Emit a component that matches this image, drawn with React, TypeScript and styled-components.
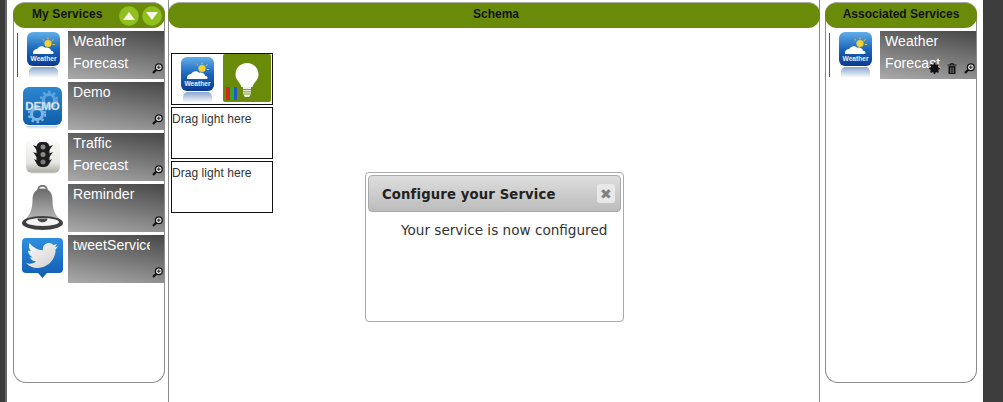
import React from "react";
import styled, { createGlobalStyle } from "styled-components";

const Global = createGlobalStyle`
  html, body { margin: 0; padding: 0; height: 402px; overflow: hidden; background: #fff; }
  #root { height: 402px; }
`;

const Page = styled.div`
  display: flex;
  width: 1003px;
  height: 402px;
  overflow: hidden;
  font-family: "Liberation Sans", Arial, sans-serif;
`;
const Edge = styled.div`
  width: 7px;
  flex: none;
  background: linear-gradient(90deg, #3c3c3c 0 5px, #666 5px);
`;
const RightEdge = styled.div`
  flex: 1;
  background: #3d3d3d;
`;
const Stage = styled.div`
  position: relative;
  display: flex;
  align-items: flex-start;
  width: 976px;
  flex: none;
  padding: 2px 6px 0 6px;
  box-sizing: border-box;
  gap: 3px;
  background: #fff;
`;
const SidePanel = styled.section`
  width: 152px;
  height: 381px;
  flex: none;
  box-sizing: border-box;
  border: 1px solid #8c8c8c;
  border-top: none;
  border-radius: 13px;
`;
const Head = styled.header`
  height: 26px;
  margin: 0 -1px;
  box-sizing: border-box;
  display: flex;
  align-items: center;
  background: #6a8b0a;
  border-top: 1px solid #a9a9a0;
  border-radius: 12px;
  color: #10140a;
  font-weight: bold;
  font-size: 12px;
`;
const HeadTitle = styled.span<{ $shift?: number }>`
  flex: 1;
  margin-top: -3px;
  text-align: center;
  padding-left: ${(p) => p.$shift ?? 0}px;
`;
const LeftTitle = styled.span`
  flex: 1;
  margin-top: -3px;
  padding-left: 19px;
  letter-spacing: 0.1px;
`;
const RoundBtn = styled.span`
  width: 20px;
  height: 20px;
  margin-right: 3px;
  border-radius: 50%;
  background: radial-gradient(circle, #90bf20 0 62%, #7aa312 78%, #5f8208 100%);
  display: flex;
  align-items: center;
  justify-content: center;
  flex: none;
`;
const Tri = styled.i<{ $down?: boolean }>`
  width: 0;
  height: 0;
  border-left: 6px solid transparent;
  border-right: 6px solid transparent;
  ${(p) => (p.$down ? "border-top: 8px solid #f6f8e8;" : "border-bottom: 8px solid #f6f8e8;")}
`;
const List = styled.div`
  display: flex;
  flex-direction: column;
  gap: 3px;
  padding: 3px 0 0 0;
`;
const Row = styled.div`
  display: flex;
  height: 48px;
  position: relative;
`;
const Marker = styled.i`
  position: absolute;
  left: 3px;
  top: 2px;
  width: 1px;
  height: 44px;
  background: #555;
`;
const IconSlot = styled.div<{ $x: number; $y: number }>`
  width: 54px;
  flex: none;
  box-sizing: border-box;
  padding: ${(p) => p.$y}px 0 0 ${(p) => p.$x - 1}px;
  svg { display: block; }
`;
const Tile = styled.div`
  position: relative;
  width: 96px;
  height: 48px;
  flex: none;
  background: linear-gradient(190deg, #474747, #ababab);
  color: #fff;
  font-size: 14px;
  line-height: 22px;
  letter-spacing: 0.1px;
  padding: 0 0 0 5px;
  box-sizing: border-box;
`;
const TileText = styled.div`
  width: 77px;
  overflow: hidden;
  white-space: nowrap;
  margin-top: -1px;
`;
const TileActions = styled.div`
  position: absolute;
  right: 1px;
  bottom: 5px;
  display: flex;
  gap: 7px;
  align-items: center;
`;
const SchemaColumn = styled.main`
  width: 652px;
  height: 402px;
  flex: none;
  margin-top: -2px;
  margin-right: 2px;
  padding-top: 2px;
  box-sizing: border-box;
  border-left: 1px solid #8c8c8c;
  border-right: 1px solid #8c8c8c;
`;
const Slots = styled.div`
  display: flex;
  flex-direction: column;
  gap: 2px;
  width: 102px;
  padding: 25px 0 0 2px;
`;
const Slot = styled.div`
  display: flex;
  align-items: flex-start;
  height: 52px;
  box-sizing: border-box;
  border: 1px solid #111;
  color: #333;
  font-size: 12px;
  line-height: 22px;
  letter-spacing: 0.05px;
`;
const FilledSlot = styled(Slot)`
  justify-content: space-between;
  padding: 0 1px 0 9px;
`;
const SlotIcon = styled.div`
  padding-top: 3px;
  svg { display: block; }
`;
const Bulb = styled.div`
  width: 48px;
  height: 48px;
  border-radius: 2px;
  background: #6a8b0a;
  svg { display: block; }
`;
const Dialog = styled.div`
  position: absolute;
  left: 358px;
  top: 172px;
  width: 259px;
  height: 150px;
  box-sizing: border-box;
  border: 1px solid #aaa;
  border-radius: 4px;
  background: #fff;
  padding: 2px;
  font-family: "DejaVu Sans", Verdana, sans-serif;
  color: #222;
`;
const DialogHead = styled.div`
  height: 37px;
  box-sizing: border-box;
  border: 1px solid #aaa;
  border-radius: 4px;
  background: linear-gradient(180deg, #dedede, #bcbcbc);
  display: flex;
  align-items: center;
  justify-content: space-between;
  padding: 1px 5px 0 13px;
  font-weight: bold;
  font-size: 13.2px;
  letter-spacing: 0.15px;
`;
const Close = styled.span`
  width: 18px;
  height: 19px;
  margin-top: -1px;
  border-radius: 3px;
  background: #e8e8e8;
  color: #808080;
  display: flex;
  align-items: center;
  justify-content: center;
  font-size: 14px;
`;
const DialogBody = styled.p`
  margin: 0;
  padding: 10px 0 0 33px;
  font-size: 13.6px;
  line-height: 16px;
  color: #333;
  white-space: nowrap;
`;

const WeatherIcon = () => (
  <svg width="34" height="46" viewBox="0 0 34 46">
    <defs>
      <linearGradient id="wb" x1="0" y1="0" x2="0" y2="1"><stop offset="0" stopColor="#62aee8" /><stop offset=".5" stopColor="#1a66bc" /><stop offset="1" stopColor="#0b3a8e" /></linearGradient>
      <linearGradient id="wr" x1="0" y1="0" x2="0" y2="1"><stop offset="0" stopColor="#8aa6cd" /><stop offset="1" stopColor="#fff" /></linearGradient>
    </defs>
    <rect x="0" y="0" width="33" height="34" rx="6" fill="url(#wb)" />
    <path d="M2 46V40c0-3 2-5 5-5h19c3 0 5 2 5 5v6z" fill="url(#wr)" />
    <circle cx="21" cy="11.5" r="3.6" fill="#f5d033" />
    <path d="M21 5.5v2M26.5 7.5l-2 1.5M28 12.5h-2.4M15.5 7l1.6 1.5" stroke="#f5d033" strokeWidth=".9" />
    <path d="M6 21c0-3 2.4-4 4.2-4 1-3 6-4 8-1.2 3-1 5.6.8 5.8 3 1.6 0 2.6 1.2 2.6 2.4-.1.5-.4.8-1 .8H7c-.6 0-1-.4-1-1z" fill="#fff" />
    <text x="16.5" y="29" textAnchor="middle" fontFamily="Liberation Sans, Arial, sans-serif" fontSize="6.6" fontWeight="bold" fill="#e9f1fa">Weather</text>
  </svg>
);
const DemoIcon = () => (
  <svg width="39" height="42" viewBox="0 0 39 42">
    <defs>
      <linearGradient id="db" x1="0" y1="0" x2="0" y2="1"><stop offset="0" stopColor="#2c86d0" /><stop offset="1" stopColor="#0f5fa9" /></linearGradient>
      <linearGradient id="dr" x1="0" y1="0" x2="0" y2="1"><stop offset="0" stopColor="#b8cde2" /><stop offset="1" stopColor="#fff" /></linearGradient>
    </defs>
    <rect x="0" y="0" width="39" height="38" rx="6" fill="url(#db)" />
    <path d="M3 39h33l-3 3H6z" fill="url(#dr)" />
    <circle cx="26" cy="13" r="5.5" fill="none" stroke="#5fa5dd" strokeWidth="3" />
    <circle cx="26" cy="13" r="8" fill="none" stroke="#5fa5dd" strokeWidth="2.4" strokeDasharray="2.6 2.6" />
    <circle cx="14" cy="27" r="5.5" fill="none" stroke="#7ab5e4" strokeWidth="3" />
    <circle cx="14" cy="27" r="8" fill="none" stroke="#7ab5e4" strokeWidth="2.4" strokeDasharray="2.6 2.6" />
    <text x="19.5" y="23" textAnchor="middle" fontFamily="Liberation Sans, Arial, sans-serif" fontSize="11.5" fontWeight="bold" fill="#e8f0f8" stroke="#9ab8d4" strokeWidth=".3">DEMO</text>
  </svg>
);
const TrafficIcon = () => (
  <svg width="34" height="36" viewBox="0 0 34 36">
    <defs>
      <linearGradient id="tb" x1="0" y1="0" x2="0" y2="1"><stop offset="0" stopColor="#fcfcfc" /><stop offset=".7" stopColor="#e6e6e2" /><stop offset="1" stopColor="#a8a8a0" /></linearGradient>
    </defs>
    <rect x="0" y="0" width="34" height="34" rx="6" fill="url(#tb)" />
    <path d="M4 34h26" stroke="#ddd" strokeWidth="1" />
    <rect x="10.5" y="3" width="13" height="25" rx="5" fill="#1d1d1d" />
    <path d="M7 6l4 1.5v4zM27 6l-4 1.5v4zM7 13l4 1.5v4zM27 13l-4 1.5v4zM8 20l3 1.5v3.5zM26 20l-3 1.5v3.5z" fill="#1d1d1d" />
    <circle cx="17" cy="8" r="2.5" fill="#8a8a8a" />
    <circle cx="17" cy="15.5" r="2.5" fill="#8a8a8a" />
    <circle cx="17" cy="23" r="2.5" fill="#7a7a7a" />
  </svg>
);
const BellIcon = () => (
  <svg width="41" height="45" viewBox="0 0 41 45">
    <defs>
      <linearGradient id="bb" x1="0" y1="0" x2="0" y2="1"><stop offset="0" stopColor="#6a6a6a" /><stop offset=".85" stopColor="#b0b0b0" /></linearGradient>
    </defs>
    <path d="M16 6c0-7 9-7 9 0" fill="none" stroke="#777" strokeWidth="2" />
    <path d="M20.5 3.5c6.5 0 10 4.5 10 11 0 9 2 15 7.5 20-6 3-29 3-35 0 5.500-5 7.500-11 7.500-20 0-6.500 3.500-11 10-11z" fill="url(#bb)" />
    <ellipse cx="20.500" cy="38" rx="20.500" ry="7" fill="#3f3f3f" />
    <ellipse cx="20.500" cy="37" rx="16.500" ry="4" fill="#f4f4f4" />
    <path d="M15.500 33.500h10c0 5-10 5-10 0z" fill="#4a4a4a" />
  </svg>
);
const TwitterIcon = () => (
  <svg width="41" height="40" viewBox="0 0 41 40">
    <defs>
      <linearGradient id="twb" x1="0" y1="0" x2="0" y2="1"><stop offset="0" stopColor="#2f8ee0" /><stop offset="1" stopColor="#0f5cb0" /></linearGradient>
      <linearGradient id="twf" x1="0" y1="0" x2="1" y2="1"><stop offset="0" stopColor="#fbfbfb" /><stop offset="1" stopColor="#cfcfcf" /></linearGradient>
    </defs>
    <path d="M4 0h33a4 4 0 0 1 4 4v27a4 4 0 0 1-4 4H25l-4.500 5-4.500-5H4a4 4 0 0 1-4-4V4a4 4 0 0 1 4-4z" fill="url(#twb)" />
    <path d="M4 25c4 1.500 7.500.5 10-1.500-3-.3-5-1.800-6-4.200h3.200C8 18 6 15.500 6 12.500c1 .6 2 .8 3 .8C7 11 6.400 8 7.500 5c3.500 4.500 8 7 13.500 7.300-.8-4 2-7.300 6-7.300 2 0 3.500.8 4.500 2l3.500-1-2 3.200 3.200-.9-2.600 3c.2 9.500-7 18.200-17.600 18.700C12 30.300 7.500 28.700 4 25z" fill="url(#twf)" />
  </svg>
);
const Magnifier = () => (
  <svg width="11" height="11" viewBox="0 0 11 11">
    <circle cx="6.800" cy="4.200" r="3.400" fill="#e8e8e8" stroke="#111" strokeWidth="1.300" />
    <path d="M4.200 6.800L1 10" stroke="#111" strokeWidth="2.200" />
    <path d="M5 4.200h3.600M6.800 2.400V6" stroke="#111" strokeWidth=".9" />
  </svg>
);
const Gear = () => (
  <svg width="11" height="11" viewBox="0 0 11 11">
    <circle cx="5.500" cy="5.500" r="3.200" fill="#333" stroke="#111" strokeWidth="2.200" />
    <path d="M5.500 0v11M0 5.500h11M1.600 1.600l7.800 7.800M9.400 1.600L1.600 9.400" stroke="#111" strokeWidth="1.500" />
  </svg>
);
const Trash = () => (
  <svg width="10" height="11" viewBox="0 0 10 11">
    <path d="M0.500 2h9M3.500 2V.7h3V2" fill="none" stroke="#111" strokeWidth="1" />
    <path d="M1.500 3.200h7V11h-7z" fill="#111" />
    <path d="M3.500 4.500V10M5 4.500V10M6.500 4.500V10" stroke="#999" strokeWidth=".6" />
  </svg>
);
const BulbIcon = () => (
  <svg width="48" height="48" viewBox="0 0 48 48">
    <rect x="3" y="33" width="4" height="13" fill="#d8261c" />
    <rect x="7" y="33" width="4" height="13" fill="#35a82c" />
    <rect x="11" y="33" width="3" height="13" fill="#2456c8" />
    <path d="M24 9c6.500 0 11.500 5 11.500 11.500 0 5.500-4.500 7.500-6 12.500h-11c-1.500-5-6-7-6-12.500C12.500 14 17.500 9 24 9z" fill="#fff" />
    <path d="M20 33h8v7l-2 3h-4l-2-3z" fill="#eceee0" />
    <path d="M20 35.500h8M20 37.800h8M20 40h8" stroke="#6a8b0a" strokeWidth=".8" />
  </svg>
);

const services = [
  { lines: ["Weather", "Forecast"], icon: <WeatherIcon />, x: 14, y: 1, marker: true },
  { lines: ["Demo"], icon: <DemoIcon />, x: 10, y: 5 },
  { lines: ["Traffic", "Forecast"], icon: <TrafficIcon />, x: 13, y: 6 },
  { lines: ["Reminder"], icon: <BellIcon />, x: 9, y: 1 },
  { lines: ["tweetService"], icon: <TwitterIcon />, x: 9, y: 3 },
];

export default function App() {
  return (
    <Page>
      <Global />
      <Edge />
      <Stage>
        <SidePanel>
          <Head>
            <LeftTitle>My Services</LeftTitle>
            <RoundBtn><Tri /></RoundBtn>
            <RoundBtn><Tri $down /></RoundBtn>
          </Head>
          <List>
            {services.map((s) => (
              <Row key={s.lines[0]}>
                {s.marker && <Marker />}
                <IconSlot $x={s.x} $y={s.y}>{s.icon}</IconSlot>
                <Tile>
                  <TileText>{s.lines.map((l) => <div key={l}>{l}</div>)}</TileText>
                  <TileActions><Magnifier /></TileActions>
                </Tile>
              </Row>
            ))}
          </List>
        </SidePanel>
        <SchemaColumn>
          <Head><HeadTitle $shift={4}>Schema</HeadTitle></Head>
          <Slots>
            <FilledSlot>
              <SlotIcon><WeatherIcon /></SlotIcon>
              <Bulb><BulbIcon /></Bulb>
            </FilledSlot>
            <Slot>Drag light here</Slot>
            <Slot>Drag light here</Slot>
          </Slots>
        </SchemaColumn>
        <SidePanel>
          <Head><HeadTitle>Associated Services</HeadTitle></Head>
          <List>
            <Row>
              <Marker />
              <IconSlot $x={14} $y={1}><WeatherIcon /></IconSlot>
              <Tile>
                <TileText>
                  <div>Weather</div>
                  <div>Forecast</div>
                </TileText>
                <TileActions><Gear /><Trash /><Magnifier /></TileActions>
              </Tile>
            </Row>
          </List>
        </SidePanel>
        <Dialog>
          <DialogHead>
            <span>Configure your Service</span>
            <Close>✖</Close>
          </DialogHead>
          <DialogBody>Your service is now configured</DialogBody>
        </Dialog>
      </Stage>
      <RightEdge />
    </Page>
  );
}
